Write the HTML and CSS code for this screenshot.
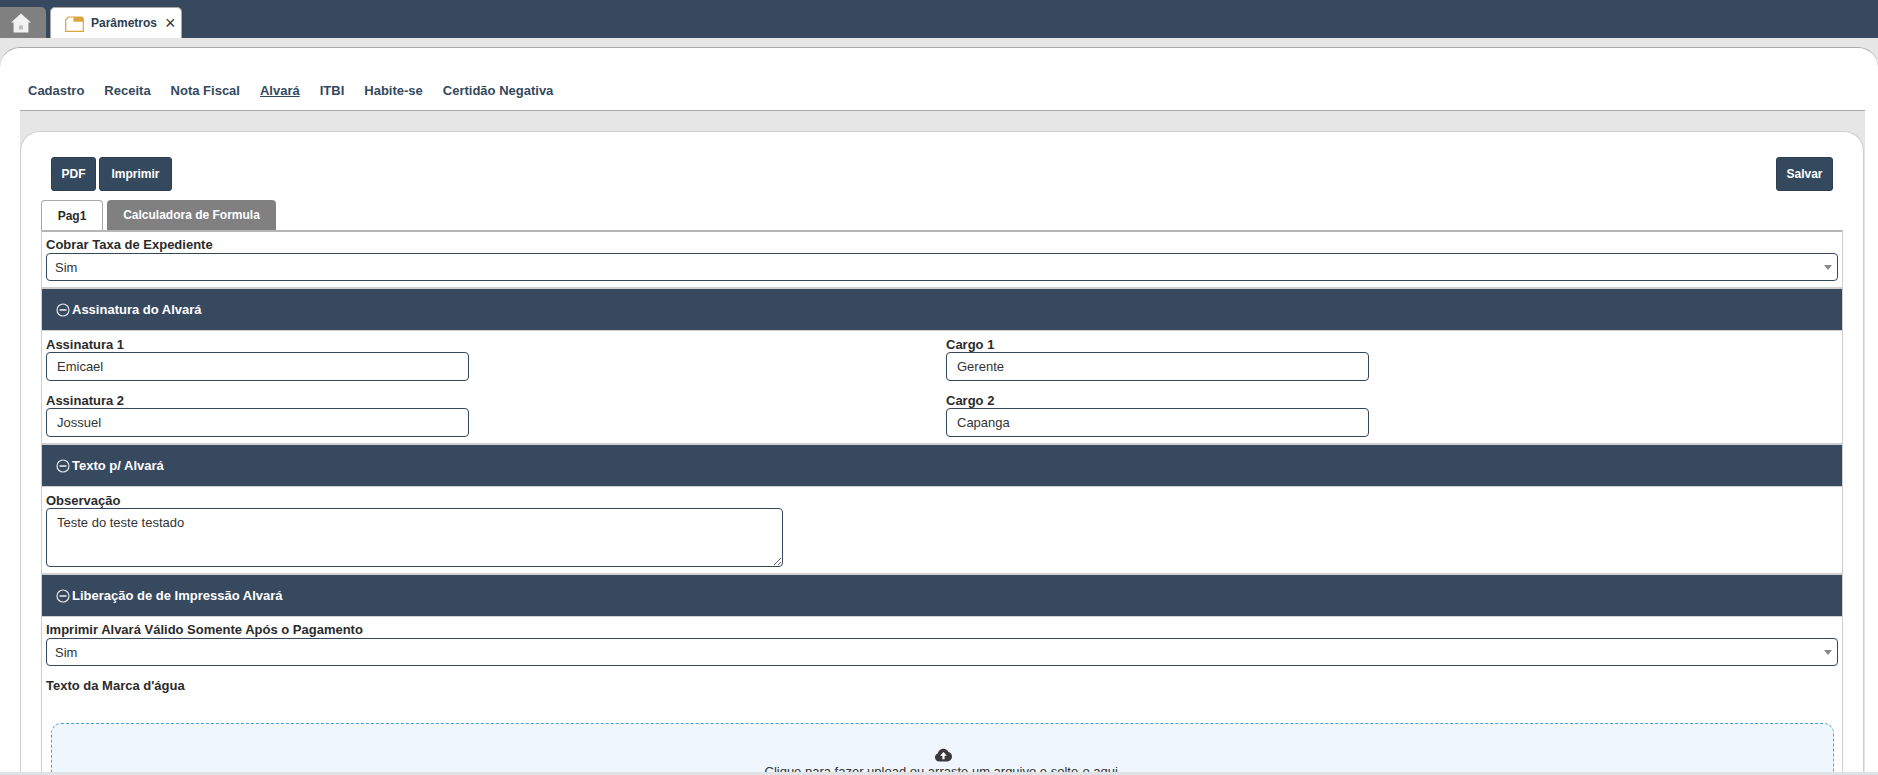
FILE: index.html
```html
<!DOCTYPE html>
<html lang="pt-BR">
<head>
<meta charset="utf-8">
<title>Parâmetros</title>
<link rel="stylesheet" href="styles.css">
</head>
<body>
<header class="topbar">
  <div class="tab-home">
    <svg class="icon-home" viewBox="0 0 20 20" width="20" height="20"><path d="M10 .5 20 9.500h-2.600V19.500H2.600V9.500H0Z" fill="#f2f2f2"/><rect x="8" y="12.500" width="4" height="4" fill="#bdbdbd"/></svg>
  </div>
  <div class="tab-doc">
    <svg class="icon-folder" viewBox="0 0 19 16" width="19" height="16"><path d="M.7 15.300V4L3.200 1H9V5H18.300V15.300Z" fill="#fff" stroke="#dba53f" stroke-width="1.200"/><path d="M9 .5H17L18.800 2V5.500H9Z" fill="#dba53f"/></svg>
    <span class="tab-doc-label">Parâmetros</span>
    <span class="tab-close">×</span>
  </div>
</header>
<div class="band">
  <main class="panel">
    <nav class="menu">
      <a>Cadastro</a><a>Receita</a><a>Nota Fiscal</a><a class="current">Alvará</a><a>ITBI</a><a>Habite-se</a><a>Certidão Negativa</a>
    </nav>
    <div class="stage">
      <section class="sheet">
        <div class="actions">
          <div class="actions-left"><button class="btn">PDF</button><button class="btn btn-wide">Imprimir</button></div>
          <button class="btn">Salvar</button>
        </div>
        <div class="subtabs"><span class="subtab on">Pag1</span><span class="subtab">Calculadora de Formula</span></div>
        <div class="box">
          <div class="field">
            <label>Cobrar Taxa de Expediente</label>
            <div class="select-wrap"><select><option>Sim</option></select></div>
          </div>
          <h2 class="section"><svg class="icon-minus" viewBox="0 0 14 14" width="14" height="14"><circle cx="7" cy="7" r="6" fill="none" stroke="#e4e6e9" stroke-width="1.200"/><rect x="3.500" y="6.200" width="7" height="1.600" fill="#e4e6e9"/></svg>Assinatura do Alvará</h2>
          <div class="grid">
            <div class="field low"><label>Assinatura 1</label><input value="Emicael"></div>
            <div class="field low"><label>Cargo 1</label><input value="Gerente"></div>
            <div class="field low"><label>Assinatura 2</label><input value="Jossuel"></div>
            <div class="field low"><label>Cargo 2</label><input value="Capanga"></div>
          </div>
          <h2 class="section"><svg class="icon-minus" viewBox="0 0 14 14" width="14" height="14"><circle cx="7" cy="7" r="6" fill="none" stroke="#e4e6e9" stroke-width="1.200"/><rect x="3.500" y="6.200" width="7" height="1.600" fill="#e4e6e9"/></svg>Texto p/ Alvará</h2>
          <div class="field low">
            <label>Observação</label>
            <textarea>Teste do teste testado</textarea>
          </div>
          <h2 class="section"><svg class="icon-minus" viewBox="0 0 14 14" width="14" height="14"><circle cx="7" cy="7" r="6" fill="none" stroke="#e4e6e9" stroke-width="1.200"/><rect x="3.500" y="6.200" width="7" height="1.600" fill="#e4e6e9"/></svg>Liberação de de Impressão Alvará</h2>
          <div class="field">
            <label>Imprimir Alvará Válido Somente Após o Pagamento</label>
            <div class="select-wrap"><select><option>Sim</option></select></div>
          </div>
          <div class="field mark">
            <label>Texto da Marca d'água</label>
          </div>
          <div class="dropzone">
            <svg class="icon-cloud" viewBox="0 0 20 16" width="17" height="14"><path d="M5 15.500C2 15.500 0 13.500 0 10.800 0 8.600 1.300 6.900 3.300 6.300 3.700 3 6.400.5 9.800.5c2.800 0 5 1.600 6 4 2.400.5 4.200 2.600 4.200 5.200 0 3.200-2.500 5.800-5.500 5.800Z" fill="#3a3a3a"/><path d="M10 4.500 14 9H11.300V13H8.700V9H6Z" fill="#fff"/></svg>
            <p>Clique para fazer upload ou arraste um arquivo e solte-o aqui.</p>
          </div>
        </div>
      </section>
    </div>
  </main>
</div>
<div class="foot"></div>
</body>
</html>
```
FILE: styles.css
```css
* { box-sizing: border-box; }
html, body { height: 100%; }
body {
  margin: 0;
  height: 775px;
  overflow: hidden;
  display: flex;
  flex-direction: column;
  background: #e6e6e6;
  font-family: "Liberation Sans", Arial, sans-serif;
  font-size: 13px;
  color: #2b2b2b;
}

.topbar {
  flex: none;
  height: 38px;
  background: #36495f;
  display: flex;
  align-items: flex-end;
  gap: 4px;
}
.tab-home {
  width: 46px;
  height: 31px;
  background: #808080;
  border-radius: 0 5px 0 0;
  display: flex;
  align-items: center;
  padding-left: 11px;
}
.tab-doc {
  width: 132px;
  height: 31px;
  background: #fff;
  border: 1px solid #a8a8a8;
  border-bottom: 0;
  border-radius: 5px 5px 0 0;
  display: flex;
  align-items: center;
  padding-left: 14px;
}
.icon-folder { flex: none; margin-top: 1px; }
.tab-doc-label { margin-left: 7px; font-size: 12px; font-weight: bold; color: #2c3e50; }
.tab-close { margin-left: 8px; font-size: 18px; line-height: 1; color: #333; }

.band {
  flex: 1;
  min-height: 0;
  padding-top: 9px;
  display: flex;
}
.panel {
  flex: 1;
  min-width: 0;
  background: #fff;
  border-top: 1px solid #aaa;
  border-radius: 20px 20px 0 0;
  display: flex;
  flex-direction: column;
  overflow: hidden;
}
.menu {
  flex: none;
  height: 62px;
  padding: 22px 0 0 28px;
  display: flex;
  align-items: center;
  gap: 20px;
  font-size: 13px;
  font-weight: bold;
  color: #34495e;
}
.menu .current { text-decoration: underline; }

.stage {
  flex: 1;
  min-height: 0;
  margin: 0 13px 0 20px;
  padding-top: 20px;
  background: #e6e6e6;
  border-top: 1px solid #aaa;
  display: flex;
}
.sheet {
  flex: 1;
  min-width: 0;
  background: #fff;
  border: 1px solid #cfcfcf;
  border-bottom: 0;
  border-radius: 20px 20px 0 0;
  margin-right: 1px;
  padding: 25px 20px 0 20px;
  overflow: hidden;
}
.actions {
  height: 34px;
  margin: 0 10px 0 10px;
  display: flex;
  justify-content: space-between;
}
.actions-left { display: flex; gap: 3px; }
.btn {
  height: 34px;
  padding: 0 9.500px;
  background: #34495e;
  border: 1px solid #2c3e50;
  border-radius: 3px;
  color: #fff;
  font: bold 12px "Liberation Sans", Arial, sans-serif;
}
.btn-wide { padding: 0 11.500px; }
.subtabs {
  margin-top: 9px;
  height: 30px;
  display: flex;
  gap: 4px;
  font-size: 12px;
  font-weight: bold;
}
.subtab {
  width: 169px;
  background: #808080;
  color: #fff;
  border-radius: 4px 4px 0 0;
  display: flex;
  align-items: center;
  justify-content: center;
}
.subtab.on {
  width: 62px;
  background: #fff;
  color: #2b2b2b;
  border: 1px solid #a8a8a8;
  border-bottom: 0;
}
.box {
  border: 1px solid #cfcfcf;
  border-top: 2px solid #b5b5b5;
  width: 1802px;
  height: 700px;
}
.field { padding: 5px 4px 6px; display: flex; flex-direction: column; }
.field label {
  font-size: 13px;
  font-weight: bold;
  line-height: 15px;
  height: 16px;
  color: #2b2b2b;
}
.low label { padding-top: 1px; }
.field input, .field select, .field textarea {
  display: block;
  background: #fff;
  border: 1px solid #34495e;
  border-radius: 4px;
  font: 13px "Liberation Sans", Arial, sans-serif;
  color: #333;
  outline: 0;
}
.field input { height: 29px; width: 423px; padding: 0 10px; }
.select-wrap { position: relative; }
.field select {
  width: 100%;
  height: 28px;
  padding: 0 8px;
  appearance: none;
}
.select-wrap::after {
  content: "";
  position: absolute;
  right: 6px;
  top: 12px;
  border-left: 4px solid transparent;
  border-right: 4px solid transparent;
  border-top: 5px solid #888;
}
.field textarea {
  width: 737px;
  height: 59px;
  padding: 6px 10px;
  resize: both;
}
.section {
  margin: 0;
  height: 44px;
  border-top: 2px solid #cfcfcf;
  border-bottom: 1px solid #cfcfcf;
  background: #36495f;
  color: #fff;
  font-size: 13px;
  font-weight: bold;
  display: flex;
  align-items: center;
  gap: 2px;
  padding-left: 14px;
}
.icon-minus { flex: none; }
.grid {
  display: grid;
  grid-template-columns: 900px 1fr;
}
.mark { padding-top: 6px; padding-bottom: 0; }
.dropzone {
  margin: 29px 0 0 9px;
  width: 1783px;
  height: 120px;
  background: #eff6fd;
  border: 1px dashed #4aa3df;
  border-radius: 10px;
  display: flex;
  flex-direction: column;
  align-items: center;
  padding-top: 24px;
  padding-left: 1px;
  font-size: 13px;
  color: #333;
}
.dropzone p { margin: 2px 0 0; line-height: 15px; }
.icon-cloud { flex: none; }
.foot { flex: none; height: 3px; background: #dfe3e6; }
```
